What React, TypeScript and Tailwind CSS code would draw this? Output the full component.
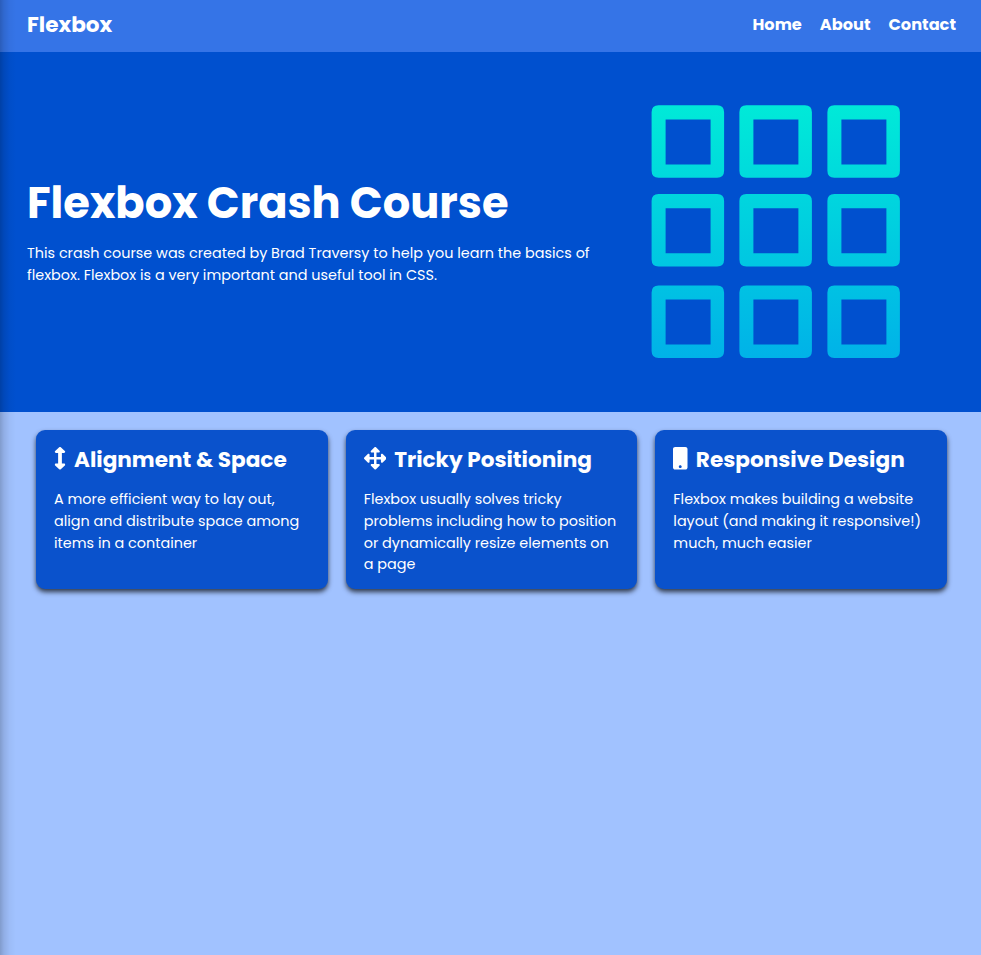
import type { ReactNode } from "react";
import { FaArrowsAltV, FaArrowsAlt, FaMobile } from "react-icons/fa";

function Lines({ lines }: { lines: string[] }) {
  return (
    <p className="text-[14.4px] leading-[21.6px]">
      {lines.map((line) => (
        <span key={line} className="block whitespace-nowrap">
          {line}
        </span>
      ))}
    </p>
  );
}

function Card({ icon, title, lines }: { icon: ReactNode; title: string; lines: string[] }) {
  return (
    <article className="flex-1 rounded-[9px] bg-[#0a52cc] px-[18px] pt-[13px] shadow-[0_3px_5px_rgba(0,0,0,0.7)]">
      <h2 className="mb-[12.4px] flex h-[34px] items-center whitespace-nowrap text-[21.6px] font-bold">
        {icon}
        <span>{title}</span>
      </h2>
      <Lines lines={lines} />
    </article>
  );
}

function GridLogo() {
  const columns = [651.6, 739.4, 827.4];
  const rows = [105.3, 194, 285.4];
  return (
    <svg className="block h-[254px] w-[250px]" viewBox="651 105 250 254" fill="none">
      <defs>
        <linearGradient id="aqua" gradientUnits="userSpaceOnUse" x1="0" y1="105" x2="0" y2="358">
          <stop stopColor="#00ead8" />
          <stop offset="1" stopColor="#00b2e8" />
        </linearGradient>
      </defs>
      {rows.map((y) =>
        columns.map((x) => (
          <path
            key={`${x}-${y}`}
            fill="url(#aqua)"
            fillRule="evenodd"
            d={`M${x + 7} ${y}h58.5q7 0 7 7v58.5q0 7 -7 7h-58.5q-7 0 -7 -7v-58.5q0 -7 7 -7zM${x + 14} ${y + 14.2}v45h45v-45z`}
          />
        )),
      )}
    </svg>
  );
}

export default function App() {
  return (
    <div className="relative h-[955px] overflow-hidden bg-[#a1c2ff] font-['Poppins','Inter',sans-serif] text-white">
      <nav className="flex h-[52px] items-center justify-between bg-[#3574e7] pb-[2px] pl-[27px] pr-[25px] font-bold">
        <a className="text-[21.6px]">Flexbox</a>
        <div className="flex gap-[18px] text-[16.2px]">
          <a>Home</a>
          <a>About</a>
          <a>Contact</a>
        </div>
      </nav>
      <header className="flex h-[360px] items-start justify-between bg-[#0050cf] pl-[27px] pr-[80px]">
        <div className="pt-[119px]">
          <h1 className="mb-[7px] whitespace-nowrap text-[43.2px] font-bold leading-[65px]">Flexbox Crash Course</h1>
          <Lines
            lines={[
              "This crash course was created by Brad Traversy to help you learn the basics of",
              "flexbox. Flexbox is a very important and useful tool in CSS.",
            ]}
          />
        </div>
        <div className="pt-[53px]">
          <GridLogo />
        </div>
      </header>
      <main className="flex h-[177px] gap-[18px] pl-[36px] pr-[34px] pt-[18px]">
        <Card
          icon={<FaArrowsAltV preserveAspectRatio="none" className="mr-[8px] mb-[3px] h-[22.5px] w-[12px] shrink-0" />}
          title="Alignment & Space"
          lines={["A more efficient way to lay out,", "align and distribute space among", "items in a container"]}
        />
        <Card
          icon={<FaArrowsAlt className="mr-[8px] mb-[3px] size-[22.5px] shrink-0" />}
          title="Tricky Positioning"
          lines={[
            "Flexbox usually solves tricky",
            "problems including how to position",
            "or dynamically resize elements on",
            "a page",
          ]}
        />
        <Card
          icon={<FaMobile preserveAspectRatio="none" className="mr-[8px] mb-[3px] h-[22.5px] w-[14.5px] shrink-0" />}
          title="Responsive Design"
          lines={["Flexbox makes building a website", "layout (and making it responsive!)", "much, much easier"]}
        />
      </main>
      <div className="pointer-events-none absolute inset-y-0 left-0 w-[16px] bg-[linear-gradient(to_right,rgba(0,0,0,0.2),rgba(0,0,0,0.1)_25%,rgba(0,0,0,0.03)_60%,transparent)]" />
    </div>
  );
}
